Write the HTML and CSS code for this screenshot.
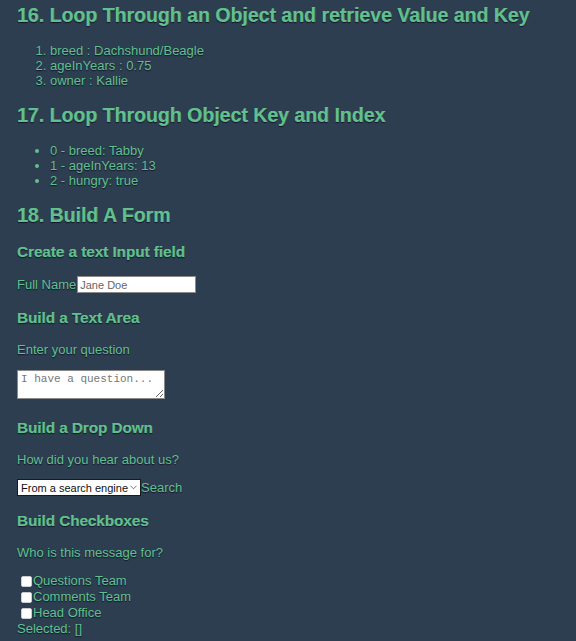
FILE: index.html
```html
<!DOCTYPE html>
<html>
<head>
<meta charset="utf-8">
<link rel="stylesheet" href="styles.css">
</head>
<body>
<div class="app">
  <h2 class="h2">16. Loop Through an Object and retrieve Value and Key</h2>
  <ol class="list">
    <li>breed : Dachshund/Beagle</li>
    <li>ageInYears : 0.75</li>
    <li>owner : Kallie</li>
  </ol>
  <h2 class="h2">17. Loop Through Object Key and Index</h2>
  <ul class="list">
    <li>0 - breed: Tabby</li>
    <li>1 - ageInYears: 13</li>
    <li>2 - hungry: true</li>
  </ul>
  <h2 class="h2">18. Build A Form</h2>
  <h3 class="h3">Create a text Input field</h3>
  <div class="row"><label class="lbl">Full Name</label><input class="text" type="text" placeholder="Jane Doe"></div>
  <h3 class="h3">Build a Text Area</h3>
  <p class="p">Enter your question</p>
  <textarea class="area" placeholder="I have a question..."></textarea>
  <h3 class="h3">Build a Drop Down</h3>
  <p class="p">How did you hear about us?</p>
  <div class="row row-sel"><span class="selwrap"><select class="sel"><option>From a search engine</option></select><svg class="chev" width="7" height="5" viewBox="0 0 7 5"><path d="M0.5 0.8 L3.5 3.8 L6.5 0.8" fill="none" stroke="#666" stroke-width="0.9"/></svg></span><span class="lbl">Search</span></div>
  <h3 class="h3">Build Checkboxes</h3>
  <p class="p">Who is this message for?</p>
  <div class="checks">
    <label class="chk"><input type="checkbox" class="box">Questions Team</label>
    <label class="chk"><input type="checkbox" class="box">Comments Team</label>
    <label class="chk"><input type="checkbox" class="box">Head Office</label>
    <div class="sel-out">Selected: []</div>
  </div>
</div>
</body>
</html>
```

FILE: styles.css
```css
html, body {
  margin: 0;
  padding: 0;
  background: #2c3e50;
}
body {
  font-family: "Liberation Sans", Arial, sans-serif;
  color: #62c08e;
  font-size: 13px;
  text-shadow: 0 1px 1px #15152e;
}
.app {
  padding: 0 17px 20px 17px;
}
.h2 {
  font-size: 19.5px;
  margin: 4px 0 16px;
  line-height: 23px;
  text-shadow: 0 1px 1px #15152e, 0.4px 0 0 #62c08e;
}
.list {
  margin: 0 0 16px;
  padding-left: 33px;
  line-height: 15px;
}
.h3 {
  font-size: 15.2px;
  margin: 16px 0 15px;
  line-height: 18px;
  text-shadow: 0 1px 1px #15152e, 0.3px 0 0 #62c08e;
}
.p {
  margin: 0 0 13px;
  line-height: 15px;
}
.row {
  display: flex;
  align-items: center;
}
.row-sel {
  margin-top: -1px;
}
.lbl {
  line-height: 15px;
}
.text, .area, .sel {
  text-shadow: none;
}
.text {
  width: 119px;
  height: 17px;
  box-sizing: border-box;
  border: 1px solid #8a8a8a;
  border-radius: 0;
  padding: 1px 2px;
  font-family: "Liberation Sans", Arial, sans-serif;
  font-size: 11px;
  margin: 0 0 0 1px;
}
.text::placeholder { color: #666; text-shadow: none; }
.area {
  display: block;
  width: 148px;
  height: 29px;
  box-sizing: border-box;
  border: 1px solid #8a8a8a;
  padding: 2px 3px;
  font-family: "Liberation Mono", "Courier New", monospace;
  font-size: 11px;
  margin: 0 0 20px 0;
}
.area::placeholder { color: #777; text-shadow: none; }
.selwrap {
  position: relative;
  display: inline-block;
}
.sel {
  appearance: none;
  -webkit-appearance: none;
  width: 124px;
  height: 17px;
  box-sizing: border-box;
  border: 1px solid #1a1a1a;
  border-radius: 0;
  background: #fff;
  color: #111;
  font-family: "Liberation Sans", Arial, sans-serif;
  font-size: 11px;
  padding: 0 0 0 3px;
  margin: 0;
  display: block;
}
.chev {
  position: absolute;
  right: 4px;
  top: 6px;
}
.checks {
  display: flex;
  flex-direction: column;
  line-height: 16px;
}
.chk {
  display: flex;
  align-items: center;
}
.box {
  appearance: none;
  -webkit-appearance: none;
  width: 11px;
  height: 11px;
  background: #fff;
  border: 1px solid #ccc;
  border-radius: 2px;
  margin: 0 1px 0 4px;
  box-sizing: border-box;
}
.sel-out {
  line-height: 15px;
}
```
